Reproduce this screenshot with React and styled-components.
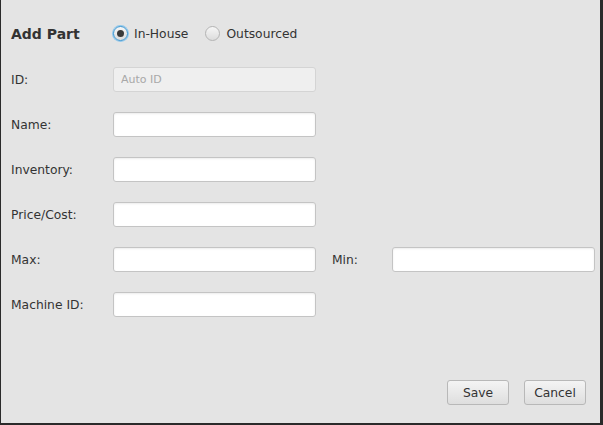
import React from "react";
import styled, { createGlobalStyle } from "styled-components";

const Global = createGlobalStyle`
  html, body { margin: 0; padding: 0; background: #e4e4e4; }
  body { font-family: "DejaVu Sans", Verdana, sans-serif; }
  * { box-sizing: border-box; }
`;

const Window = styled.div`
  width: 603px;
  height: 425px;
  background: #e4e4e4;
  border-left: 1px solid #2a2a2a;
  border-right: 3px solid #2a2a2a;
  border-bottom: 2px solid #2a2a2a;
  display: flex;
  flex-direction: column;
  padding: 21px 0 18px 10px;
  color: #333;
  font-size: 12px;
`;

const Header = styled.div`
  display: flex;
  align-items: center;
  height: 25px;
  margin-bottom: 21px;
`;

const Title = styled.div`
  font-weight: bold;
  font-size: 14px;
  color: #333;
  width: 102px;
`;

const RadioGroup = styled.div`
  display: flex;
  align-items: center;
  gap: 17px;
`;

const RadioLabel = styled.label`
  display: flex;
  align-items: center;
  gap: 6px;
  font-size: 12.3px;
  color: #333;
`;

const RadioCircle = styled.span`
  width: 15px;
  height: 15px;
  border-radius: 50%;
  display: flex;
  align-items: center;
  justify-content: center;
  background: linear-gradient(#f6f6f6, #dcdcdc);
  border: 1px solid ${(p) => (p.$checked ? "#3b97d3" : "#b4b4b4")};
  box-shadow: ${(p) => (p.$checked ? "0 0 0 1px #8fc7ec" : "none")};
  &::after {
    content: "";
    display: ${(p) => (p.$checked ? "block" : "none")};
    width: 7px;
    height: 7px;
    border-radius: 50%;
    background: #3a3a3a;
  }
`;

const Form = styled.div`
  display: grid;
  grid-template-columns: 102px 203px 76px 203px;
  row-gap: 20px;
  grid-auto-rows: 25px;
`;

const Label = styled.div`
  display: flex;
  align-items: center;
  font-size: 12.3px;
  color: #333;
`;

const FieldWrap = styled.div`
  display: contents;
`;

const Input = styled.input`
  width: 203px;
  height: 25px;
  border: 1px solid #c4c4c4;
  border-radius: 3px;
  background: ${(p) => (p.disabled ? "#efefef" : "#fff")};
  box-shadow: ${(p) => (p.disabled ? "none" : "inset 0 1px 2px rgba(0,0,0,0.08)")};
  font-family: "DejaVu Sans", Verdana, sans-serif;
  font-size: 11px;
  padding: 0 7px;
  outline: none;
  color: #333;
  &::placeholder { color: #a8a8a8; }
  &:disabled { border-color: #d4d4d4; }
`;

const MinLabel = styled(Label)`
  padding-left: 16px;
`;

const Spacer = styled.div`
  flex: 1;
`;

const Footer = styled.div`
  display: flex;
  justify-content: flex-end;
  gap: 15px;
  padding-right: 14px;
`;

const Button = styled.button`
  width: 62px;
  height: 25px;
  border: 1px solid #b8b8b8;
  border-radius: 3px;
  background: linear-gradient(#f4f4f4, #dedede);
  font-family: "DejaVu Sans", Verdana, sans-serif;
  font-size: 12.3px;
  color: #333;
  padding: 0;
`;

const rows = [
  { label: "ID:", placeholder: "Auto ID", disabled: true },
  { label: "Name:" },
  { label: "Inventory:" },
  { label: "Price/Cost:" },
  { label: "Max:", min: true },
  { label: "Machine ID:" },
];

export default function App() {
  return (
    <>
      <Global />
      <Window>
        <Header>
          <Title>Add Part</Title>
          <RadioGroup>
            <RadioLabel>
              <RadioCircle $checked />
              In-House
            </RadioLabel>
            <RadioLabel>
              <RadioCircle />
              Outsourced
            </RadioLabel>
          </RadioGroup>
        </Header>
        <Form>
          {rows.map((r) => (
            <FieldWrap key={r.label}>
              <Label>{r.label}</Label>
              <Input disabled={r.disabled} placeholder={r.placeholder} />
              {r.min ? (
                <>
                  <MinLabel>Min:</MinLabel>
                  <Input />
                </>
              ) : (
                <>
                  <div />
                  <div />
                </>
              )}
            </FieldWrap>
          ))}
        </Form>
        <Spacer />
        <Footer>
          <Button>Save</Button>
          <Button>Cancel</Button>
        </Footer>
      </Window>
    </>
  );
}
